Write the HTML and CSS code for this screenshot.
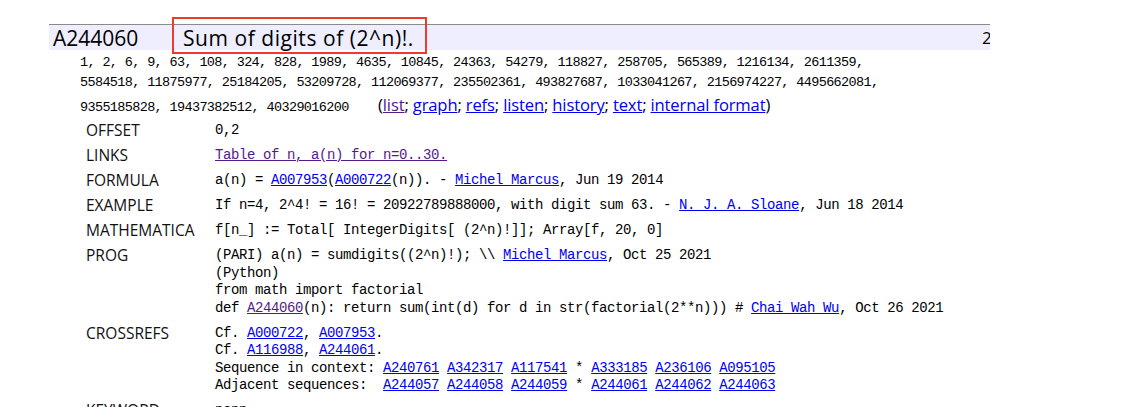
FILE: index.html
```html
<!DOCTYPE html>
<html>
<head>
<meta charset="utf-8">
<link rel="stylesheet" href="styles.css">
</head>
<body>
<div class="page">
  <div class="seq-head">
    <div class="seq-id">A244060</div>
    <div class="seq-title"><span class="title-text">Sum of digits of (2^n)!.</span><span class="highlight"></span></div>
    <div class="seq-extra">2</div>
  </div>
  <div class="seq-data">
    <div class="data-line">1, 2, 6, 9, 63, 108, 324, 828, 1989, 4635, 10845, 24363, 54279, 118827, 258705, 565389, 1216134, 2611359,</div>
    <div class="data-line">5584518, 11875977, 25184205, 53209728, 112069377, 235502361, 493827687, 1033041267, 2156974227, 4495662081,</div>
    <div class="data-line last">9355185828, 19437382512, 40329016200 <span class="data-links">(<a class="visited" href="#">list</a>; <a href="#">graph</a>; <a href="#">refs</a>; <a href="#">listen</a>; <a href="#">history</a>; <a href="#">text</a>; <a href="#">internal format</a>)</span></div>
  </div>
  <div class="entries">
    <div class="label">OFFSET</div>
    <div class="value"><div>0,2</div></div>

    <div class="label">LINKS</div>
    <div class="value"><div><a class="visited" href="#">Table of n, a(n) for n=0..30.</a></div></div>

    <div class="label">FORMULA</div>
    <div class="value"><div>a(n) = <a href="#">A007953</a>(<a href="#">A000722</a>(n)). - <a href="#">Michel Marcus</a>, Jun 19 2014</div></div>

    <div class="label">EXAMPLE</div>
    <div class="value"><div>If n=4, 2^4! = 16! = 20922789888000, with digit sum 63. - <a href="#">N. J. A. Sloane</a>, Jun 18 2014</div></div>

    <div class="label">MATHEMATICA</div>
    <div class="value"><div>f[n_] := Total[ IntegerDigits[ (2^n)!]]; Array[f, 20, 0]</div></div>

    <div class="label">PROG</div>
    <div class="value">
      <div>(PARI) a(n) = sumdigits((2^n)!); \\ <a href="#">Michel Marcus</a>, Oct 25 2021</div>
      <div>(Python)</div>
      <div>from math import factorial</div>
      <div>def <a class="visited" href="#">A244060</a>(n): return sum(int(d) for d in str(factorial(2**n))) # <a href="#">Chai Wah Wu</a>, Oct 26 2021</div>
    </div>

    <div class="label">CROSSREFS</div>
    <div class="value">
      <div>Cf. <a href="#">A000722</a>, <a href="#">A007953</a>.</div>
      <div>Cf. <a href="#">A116988</a>, <a href="#">A244061</a>.</div>
      <div>Sequence in context: <a href="#">A240761</a> <a href="#">A342317</a> <a href="#">A117541</a> * <a href="#">A333185</a> <a href="#">A236106</a> <a href="#">A095105</a></div>
      <div>Adjacent sequences:&nbsp; <a href="#">A244057</a> <a href="#">A244058</a> <a href="#">A244059</a> * <a href="#">A244061</a> <a href="#">A244062</a> <a href="#">A244063</a></div>
    </div>

    <div class="label">KEYWORD</div>
    <div class="value"><div>nonn</div></div>
  </div>
</div>
</body>
</html>
```

FILE: styles.css
```css
html, body {
  margin: 0;
  padding: 0;
  background: #ffffff;
  overflow: hidden;
}

.page {
  width: 941px;
  margin-left: 49px;
  padding-top: 24px;
  color: #000;
}

a {
  color: #0000ee;
  text-decoration: underline;
}

a.visited {
  color: #551a8b;
}

.seq-head {
  display: flex;
  align-items: stretch;
  height: 25px;
  border-top: 1px solid #8a8a8a;
  background: #eeeeff;
  font-family: "Open Sans", "Noto Sans", sans-serif;
  font-size: 21px;
  line-height: 26px;
  color: #000;
}

.seq-id {
  width: 130px;
  padding-left: 4px;
  flex-shrink: 0;
}

.seq-title {
  flex: 1;
  position: relative;
  letter-spacing: 0.55px;
}

.highlight {
  position: absolute;
  left: -11px;
  top: -8px;
  width: 251px;
  height: 33px;
  border: 2px solid #ee3b2f;
}

.seq-extra {
  width: 8px;
  overflow: hidden;
  flex-shrink: 0;
  font-size: 17px;
}

.seq-data {
  padding-left: 31px;
  padding-top: 3px;
  font-family: "Liberation Mono", monospace;
  font-size: 13.5px;
  letter-spacing: -0.64px;
  white-space: nowrap;
}

.data-line {
  height: 20px;
  line-height: 20px;
}

.data-line.last {
  height: 24px;
  line-height: 24px;
}

.data-links {
  margin-left: 22px;
  font-family: "Open Sans", "Noto Sans", sans-serif;
  font-size: 16.6px;
  letter-spacing: -0.15px;
}

.entries {
  display: grid;
  grid-template-columns: 129px 1fr;
  row-gap: 7.5px;
  padding-left: 37px;
  margin-top: 5px;
}

.label {
  font-family: "Open Sans", "Noto Sans", sans-serif;
  font-size: 15.5px;
  line-height: 17.5px;
  color: #111;
}

.value {
  font-family: "Liberation Mono", monospace;
  font-size: 14px;
  letter-spacing: -0.4px;
  line-height: 17.5px;
  white-space: nowrap;
}
```
